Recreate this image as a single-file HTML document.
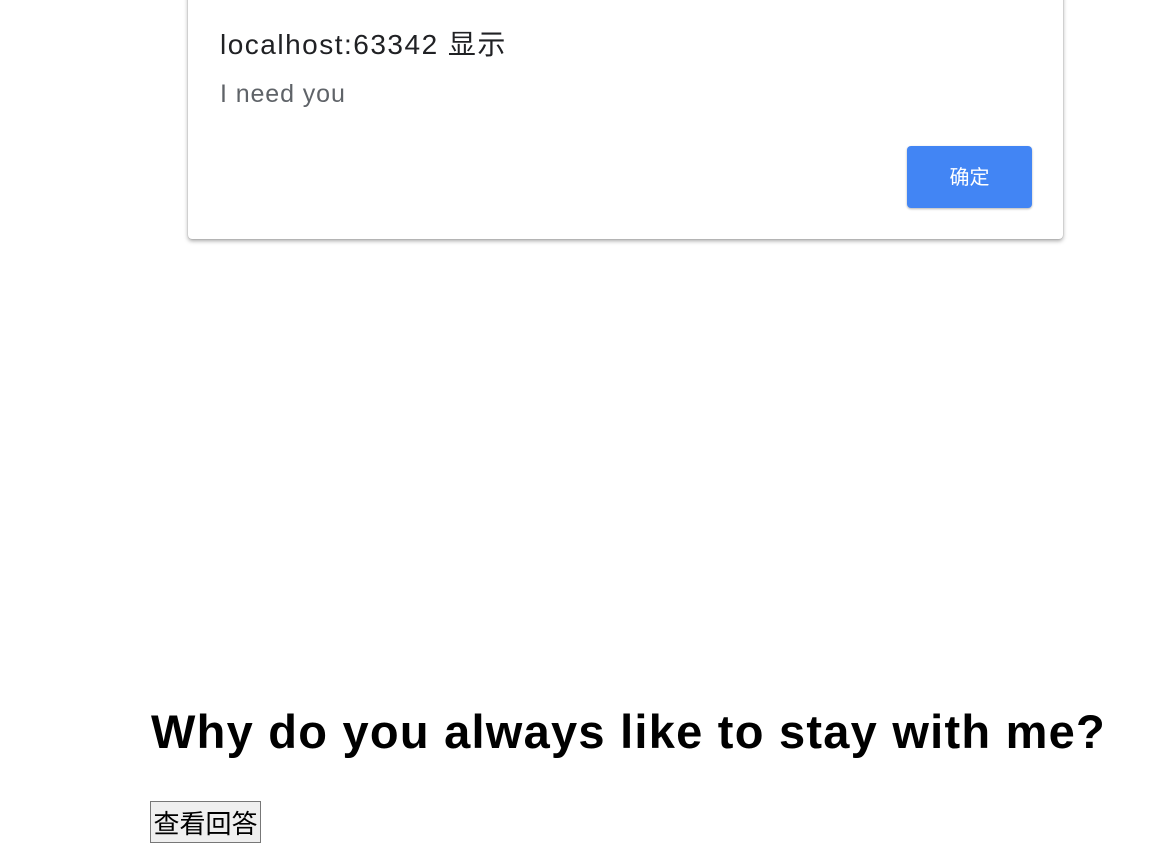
<!DOCTYPE html>
<html><head><meta charset="utf-8"><style>
html,body{margin:0;padding:0;background:#fff;width:1156px;height:863px;overflow:hidden;position:relative;font-family:"Liberation Sans","Noto Sans CJK SC",sans-serif}
.dlg{position:absolute;left:188px;top:-10px;width:875px;height:249px;background:#fff;border-radius:4px;box-shadow:0 2px 4px rgba(0,0,0,.35),0 0 1px rgba(0,0,0,.3)}
.t{position:absolute;left:220px;top:23px;font-size:28px;letter-spacing:1.5px;color:#202124;white-space:nowrap}
.m{position:absolute;left:220px;top:80px;font-size:25px;letter-spacing:0.9px;color:#5f6368;white-space:nowrap}
.b{position:absolute;left:907px;top:146px;width:125px;height:62px;background:#4285f4;border-radius:4px;color:#fff;font-size:20px;line-height:64px;text-align:center;box-shadow:0 1px 2px rgba(0,0,0,.3)}
h1{position:absolute;left:151px;top:704px;margin:0;font-size:47px;font-weight:bold;white-space:nowrap;color:#000;letter-spacing:1.25px}
.btn{position:absolute;left:150px;top:801px;width:109px;height:40px;border:1px solid #777;background:#efefef;font-size:26px;line-height:44px;text-align:center;box-sizing:content-box;color:#000}
</style></head><body>
<div class="dlg"></div>
<div class="t">localhost:63342 显示</div>
<div class="m">I need you</div>
<div class="b">确定</div>
<h1>Why do you always like to stay with me?</h1>
<div class="btn">查看回答</div>
</body></html>
